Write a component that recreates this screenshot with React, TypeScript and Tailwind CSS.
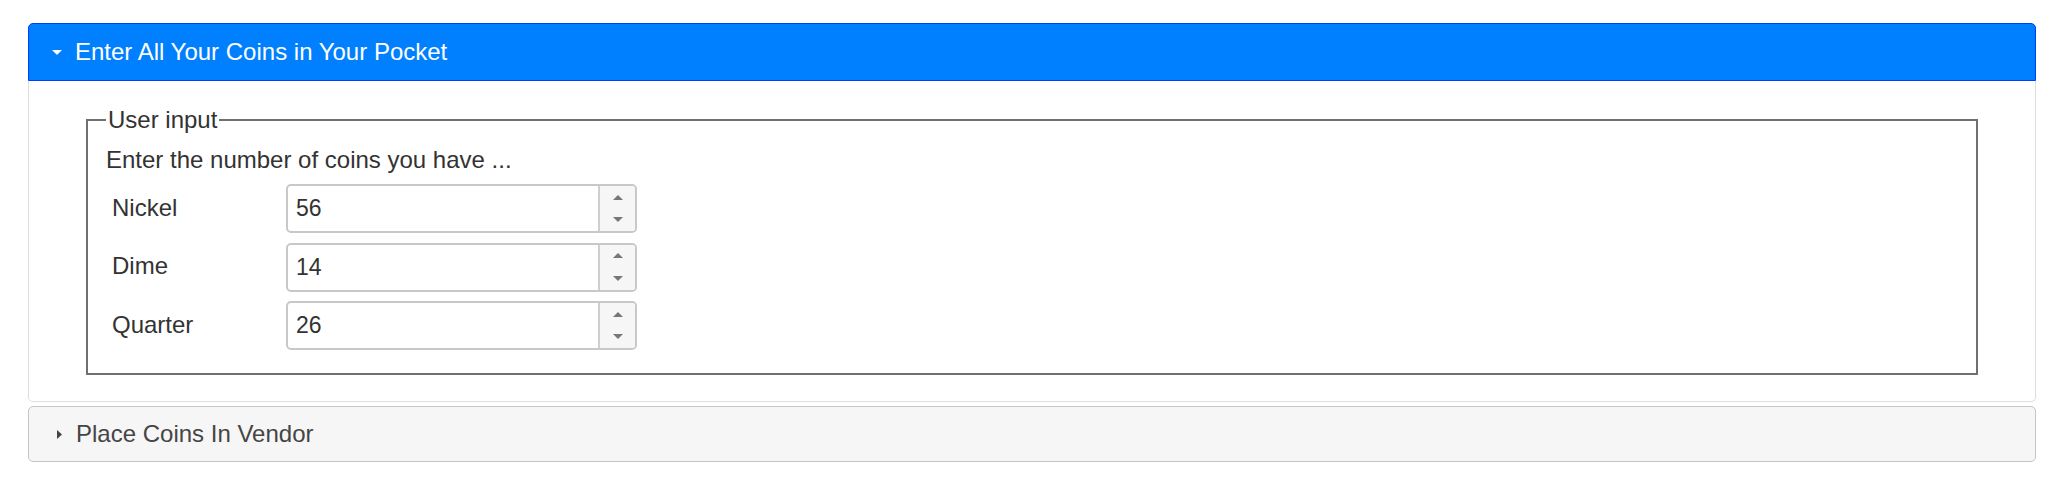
import React from "react";

interface ICoin {
  name: string;
  count: number;
}

const coins: ICoin[] = [
  { name: "Nickel", count: 56 },
  { name: "Dime", count: 14 },
  { name: "Quarter", count: 26 },
];

const Spinner = ({ value }: { value: number }) => {
  return (
    <div className="flex h-[49px] w-[351px] overflow-hidden rounded-[5px] border-2 border-[#c8c8c8] bg-white">
      <input
        type="text"
        defaultValue={value}
        className="min-w-0 flex-1 bg-transparent pl-[8px] text-[23px] text-[#333] outline-none"
      />
      <div className="flex w-[37px] flex-col border-l-2 border-[#cfcfcf] bg-[#f6f6f6]">
        <span className="flex flex-1 items-center justify-center">
          <svg width="10" height="5" viewBox="0 0 10 5">
            <polygon points="0,5 10,5 5,0" fill="#777" />
          </svg>
        </span>
        <span className="flex flex-1 items-center justify-center">
          <svg width="10" height="5" viewBox="0 0 10 5">
            <polygon points="0,0 10,0 5,5" fill="#777" />
          </svg>
        </span>
      </div>
    </div>
  );
};

const App = () => {
  return (
    <div className="min-h-[492px] bg-white pt-[23px] pl-[28px] pr-[36px] font-['Liberation_Sans',Arial,sans-serif]">
      {/* open panel */}
      <h3 className="flex h-[58px] items-center rounded-t-[5px] border border-[#003eff] bg-[#007fff] pl-[23px] text-[24px] text-white">
        <svg width="10" height="5" viewBox="0 0 10 5" className="mr-[13px]">
          <polygon points="0,0 10,0 5,5" fill="#fff" />
        </svg>
        <span>Enter All Your Coins in Your Pocket</span>
      </h3>
      <div className="rounded-b-[5px] border border-t-0 border-[#dddddd] px-[57px] pt-[25px] pb-[26px] text-[#333]">
        <fieldset className="border-2 border-[#707070] px-[18px] pb-[23px]">
          <legend className="px-[2px] text-[24px] leading-[27px]">User input</legend>
          <p className="mt-[13px] text-[24px] leading-[27px]">Enter the number of coins you have ...</p>
          <div className="mt-[11px] flex flex-col gap-[9.5px]">
            {coins.map((coin) => (
              <div key={coin.name} className="flex items-center">
                <label className="w-[180px] pb-[3px] pl-[6px] text-[24px] leading-[27px]">{coin.name}</label>
                <Spinner value={coin.count} />
              </div>
            ))}
          </div>
        </fieldset>
      </div>

      {/* closed panel */}
      <h3 className="mt-[4px] flex h-[56px] items-center rounded-[5px] border border-[#c5c5c5] bg-[#f6f6f6] pl-[28px] text-[24px] text-[#454545]">
        <svg width="5" height="9" viewBox="0 0 5 9" className="mr-[14px]">
          <polygon points="0,0 5,4.5 0,9" fill="#454545" />
        </svg>
        <span>Place Coins In Vendor</span>
      </h3>
    </div>
  );
};

export default App;
